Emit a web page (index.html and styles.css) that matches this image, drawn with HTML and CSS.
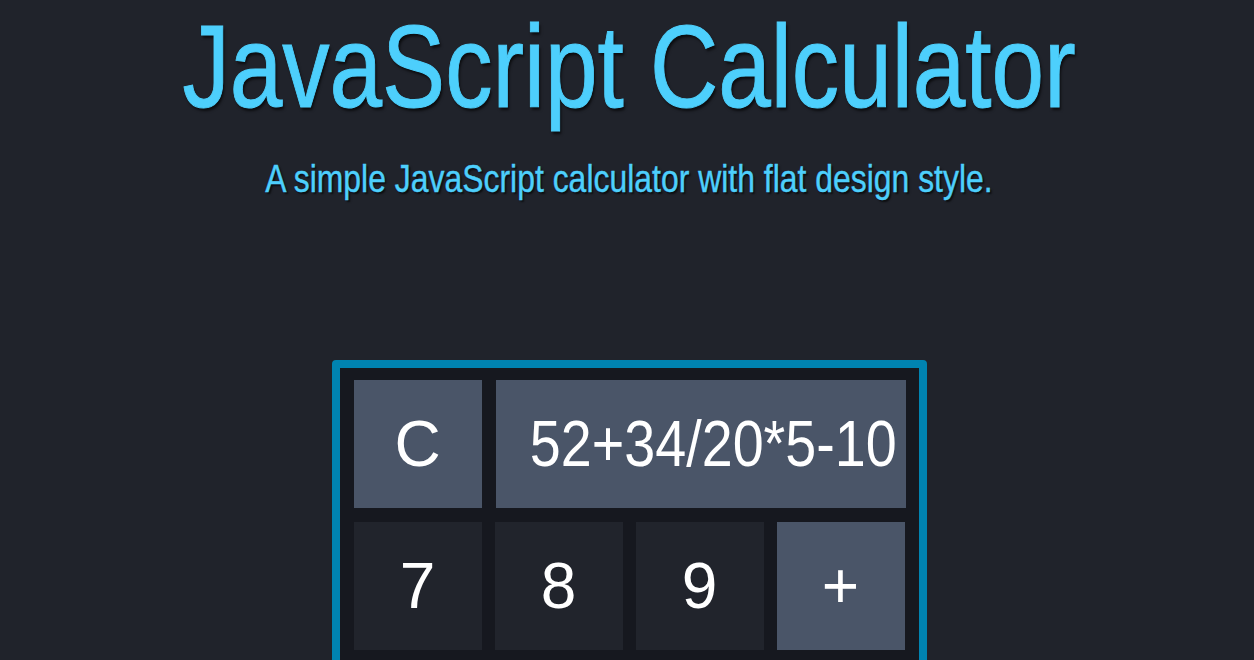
FILE: index.html
```html
<!DOCTYPE html>
<html lang="en">
<head>
<meta charset="utf-8">
<title>JavaScript Calculator</title>
<link rel="stylesheet" href="styles.css">
</head>
<body>
  <header class="intro">
    <h1 class="title"><span class="narrow narrow-title">JavaScript Calculator</span></h1>
    <p class="subtitle"><span class="narrow narrow-sub">A simple JavaScript calculator with flat design style.</span></p>
  </header>
  <main class="calc">
    <div class="row row-top">
      <button class="key key-op">C</button>
      <div class="screen"><span class="screen-text">52+34/20*5-10</span></div>
    </div>
    <div class="row">
      <button class="key">7</button>
      <button class="key">8</button>
      <button class="key">9</button>
      <button class="key key-op">+</button>
    </div>
  </main>
</body>
</html>
```

FILE: styles.css
```css
html, body {
  margin: 0;
  padding: 0;
  background: #20232b;
}

body {
  padding-left: 4px;
  font-family: "Liberation Sans", Arial, sans-serif;
}

.intro {
  text-align: center;
}

.narrow {
  display: inline-block;
  white-space: nowrap;
  transform-origin: 50% 50%;
}

.narrow-title {
  transform: scaleX(0.815);
  -webkit-text-stroke: 1px #4dcffc;
}

.narrow-sub {
  transform: scaleX(0.84);
  -webkit-text-stroke: 0.4px #4dcffc;
}

.title {
  margin: 9px 0 0;
  font-family: "Liberation Sans", Arial, sans-serif;
  font-weight: normal;
  font-size: 116px;
  line-height: 116px;
  color: #4dcffc;
  text-shadow: 2px 3px 3px rgba(0, 0, 0, 0.65);
}

.subtitle {
  margin: 35px 0 0;
  font-family: "Liberation Sans", Arial, sans-serif;
  font-size: 38px;
  line-height: 38px;
  color: #4dcffc;
  text-shadow: 2px 2px 2px rgba(0, 0, 0, 0.65);
}

.calc {
  box-sizing: border-box;
  width: 595px;
  margin: 162px auto 0;
  border: 8px solid #0083b1;
  border-radius: 4px;
  background: #16181f;
  padding: 12px 13px 14px 14px;
  display: flex;
  flex-direction: column;
  gap: 14px;
}

.row {
  display: flex;
  gap: 13px;
}

.row-top {
  gap: 14px;
}

.key {
  width: 128px;
  height: 128px;
  border: 0;
  padding: 0;
  margin: 0;
  background: #21242c;
  color: #ffffff;
  font-family: "Liberation Sans", Arial, sans-serif;
  font-size: 64px;
  line-height: 128px;
  text-align: center;
}

.key-op {
  background: #4a5568;
}

.screen {
  box-sizing: border-box;
  width: 410px;
  height: 128px;
  background: #4a5568;
  color: #ffffff;
  display: flex;
  align-items: center;
  justify-content: flex-end;
  padding-right: 9px;
}

.screen-text {
  display: inline-block;
  flex: none;
  white-space: nowrap;
  font-family: "Liberation Sans", Arial, sans-serif;
  font-size: 64px;
  line-height: 128px;
  transform: scaleX(0.87);
  transform-origin: 100% 50%;
}
```
